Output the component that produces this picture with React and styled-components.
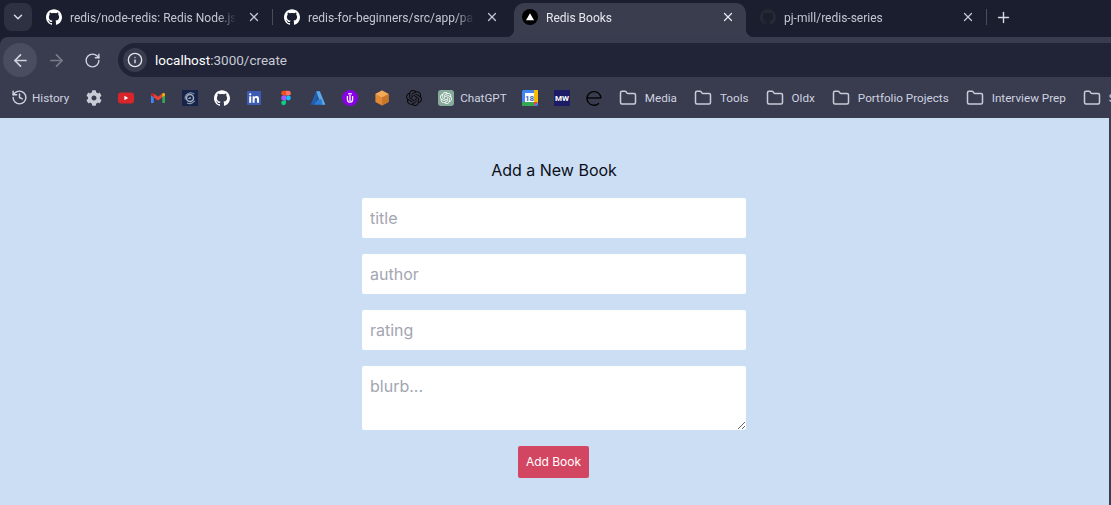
import React from "react";
import styled, { createGlobalStyle } from "styled-components";
import { ArrowLeft, ArrowRight, RotateCw, Info, X, Plus, ChevronDown, History, Folder } from "lucide-react";
import { SiGithub, SiOpenai } from "react-icons/si";
import { FaCog } from "react-icons/fa";

const Global = createGlobalStyle`
  html, body { margin: 0; padding: 0; height: 100%; overflow: hidden; background: #1b1e2e; }
  * { box-sizing: border-box; }
`;

const UI_FONT = `"Roboto", "Liberation Sans", sans-serif`;
const PAGE_FONT = `"Inter", "Liberation Sans", sans-serif`;

const Shell = styled.div`
  width: 1111px;
  height: 505px;
  display: flex;
  flex-direction: column;
  overflow: hidden;
  background: #1b1e2e;
  font-family: ${UI_FONT};
`;

const TabStrip = styled.div`
  height: 37px;
  flex: none;
  background: #1b1e2e;
  display: flex;
  padding: 3px 0 0 4px;
`;

const Expander = styled.button`
  width: 28px;
  height: 28px;
  flex: none;
  margin-right: 2px;
  border: 0;
  padding: 0;
  border-radius: 8px;
  background: #2e3142;
  color: #d7dae6;
  display: flex;
  align-items: center;
  justify-content: center;
`;

const Tab = styled.div`
  position: relative;
  flex: none;
  height: 34px;
  display: flex;
  align-items: center;
  gap: 8px;
  padding-bottom: 6px;
  width: ${(p) => (p.$active ? "232px" : "238px")};
  margin: ${(p) => (p.$active ? "0 2px 0 4px" : "0")};
  padding-left: ${(p) => (p.$active ? "8px" : "12px")};
  padding-right: 10px;
  background: ${(p) => (p.$active ? "#3a3d4e" : "transparent")};
  border-radius: ${(p) => (p.$active ? "10px 10px 0 0" : "0")};
  color: ${(p) => (p.$active ? "#e6e8f0" : "#c4c7d3")};

  ${(p) =>
    p.$active &&
    `
    &::before, &::after {
      content: "";
      position: absolute;
      bottom: 0;
      width: 8px;
      height: 8px;
    }
    &::before { left: -8px; background: radial-gradient(circle at 0 0, transparent 8px, #3a3d4e 8.5px); }
    &::after { right: -8px; background: radial-gradient(circle at 100% 0, transparent 8px, #3a3d4e 8.5px); }
  `}

  ${(p) =>
    p.$divider &&
    `
    &::after {
      content: "";
      position: absolute;
      right: -1px;
      top: 6px;
      width: 1px;
      height: 16px;
      background: #4a4d5e;
    }
  `}
`;

const Favicon = styled.span`
  width: 16px;
  height: 16px;
  flex: none;
  display: flex;
  color: ${(p) => p.$color || "#ffffff"};
`;

const TabTitle = styled.span`
  flex: 1;
  min-width: 0;
  font-size: 12px;
  line-height: 16px;
  margin-top: 1px;
  white-space: nowrap;
  overflow: hidden;
  mask-image: linear-gradient(to right, #000 calc(100% - 20px), transparent calc(100% - 2px));
`;

const TabClose = styled.span`
  flex: none;
  width: 16px;
  height: 16px;
  display: flex;
  align-items: center;
  justify-content: center;
`;

const NewTab = styled.span`
  margin: 0 0 0 9px;
  height: 28px;
  display: flex;
  align-items: center;
  color: #d7dae6;
`;

const Toolbar = styled.div`
  height: 40px;
  flex: none;
  background: #393c4e;
  border-radius: 8px 0 0 0;
  display: flex;
  align-items: center;
  padding: 6px 0 0 3px;
`;

const RoundButton = styled.span`
  width: 34px;
  height: 34px;
  flex: none;
  margin-right: 2px;
  border-radius: 50%;
  display: flex;
  align-items: center;
  justify-content: center;
  background: ${(p) => (p.$hover ? "#4a4d5f" : "transparent")};
  color: ${(p) => (p.$dim ? "#777a89" : "#cfd2de")};
`;

const UrlBar = styled.div`
  flex: 1;
  margin-left: 7px;
  height: 34px;
  border-radius: 17px 0 0 17px;
  background: #212436;
  display: flex;
  align-items: center;
  padding-left: 5px;
  gap: 8px;
  font-size: 13.5px;
  color: #c7cad6;
`;

const SiteInfo = styled.span`
  width: 24px;
  height: 24px;
  border-radius: 50%;
  background: #393c4e;
  color: #e4e6ee;
  display: flex;
  align-items: center;
  justify-content: center;
`;

const Host = styled.span`
  color: #ffffff;
`;

const BookmarkBar = styled.div`
  height: 41px;
  flex: none;
  background: #393c4e;
  display: flex;
  align-items: center;
  padding-left: 3px;
  overflow: hidden;
`;

const Bookmark = styled.div`
  flex: none;
  display: flex;
  align-items: center;
  gap: ${(p) => (p.$folder ? "9px" : "6px")};
  padding: ${(p) => (p.$folder ? "0 8px" : "0 8px")};
  padding-right: ${(p) => (p.$endPad ? p.$endPad : "8px")};
  margin-left: ${(p) => (p.$folder ? "2px" : "0")};
  font-size: 11.7px;
  color: #cfd3e0;
  white-space: nowrap;
`;

const HistoryIcon = styled(History)`
  flex: none;
  margin: 0 -2px 0 0;
`;

const FolderIcon = styled(Folder)`
  flex: none;
  margin: -1px;
`;

const PageFrame = styled.div`
  flex: 1;
  display: flex;
  background: #393c4e;
`;

const Page = styled.main`
  width: 1109px;
  background: #cbdef3;
  padding: 43px 1px 0 0;
  font-family: ${PAGE_FONT};
`;

const Heading = styled.h2`
  margin: 0 0 18px;
  font-size: 16px;
  line-height: 19px;
  font-weight: 400;
  text-align: center;
  color: #0b0f1a;
`;

const Form = styled.form`
  width: 384px;
  margin: 0 auto;
  display: flex;
  flex-direction: column;
  gap: 16px;
`;

const Input = styled.input`
  display: block;
  width: 100%;
  height: 40px;
  border: 0;
  border-radius: 2px;
  padding: 8px;
  background: #fff;
  font: 400 16px/24px ${PAGE_FONT};
  &::placeholder { color: #a3a5b1; opacity: 1; }
`;

const Blurb = styled.textarea`
  display: block;
  width: 100%;
  height: 64px;
  border: 0;
  border-radius: 2px;
  padding: 8px;
  background: #fff;
  resize: vertical;
  font: 400 16px/24px ${PAGE_FONT};
  &::placeholder { color: #a3a5b1; opacity: 1; }
`;

const Submit = styled.button`
  align-self: flex-start;
  margin-left: 156px;
  width: 71px;
  height: 32px;
  border: 0;
  border-radius: 2px;
  padding: 0;
  background: #d34661;
  color: #fff;
  font: 400 12px/16px ${PAGE_FONT};
`;

const Gmail = () => (
  <svg viewBox="0 0 16 16" width="16" height="16">
    <path d="M1 4v9h2.7V7.2L1 4z" fill="#4285f4" />
    <path d="M15 4v9h-2.7V7.2L15 4z" fill="#34a853" />
    <path d="M3.7 3.4 8 6.8l4.3-3.4v3.8L8 10.4 3.7 7.2z" fill="#ea4335" />
    <path d="M1 4.6c0-1.3 1.6-1.9 2.7-1.2v3.8L1 5.2z" fill="#c5221f" />
    <path d="M15 4.6c0-1.3-1.6-1.9-2.7-1.2v3.8L15 5.2z" fill="#fbbc04" />
  </svg>
);

const Youtube = () => (
  <svg viewBox="0 0 16 16" width="16" height="16">
    <rect x="0" y="2.5" width="16" height="11" rx="3" fill="#d9252a" />
    <path d="M6.4 5.8v4.4L10.2 8z" fill="#fff" />
  </svg>
);

const Spiral = () => (
  <svg viewBox="0 0 16 16" width="16" height="16" fill="none">
    <rect width="16" height="16" fill="#16244a" />
    <circle cx="8" cy="8" r="3.500" stroke="#a3adc0" strokeWidth="1.500" />
    <path d="M8.800 8.500c-.5-1-2-.6-1.900.5" stroke="#c3cad8" strokeWidth="1.100" />
    <path d="M3.200 9.500C2.500 6 5 2.800 8.500 2.700c1.500 0 2.800.5 3.800 1.500" stroke="#8d98b0" strokeWidth="1.100" />
    <path d="M5 13c2.500 1.200 6 .6 7.700-2.200" stroke="#8d98b0" strokeWidth="1.100" />
  </svg>
);

const Linkedin = () => (
  <svg viewBox="0 0 16 16" width="16" height="16">
    <rect x="1" y="1" width="14" height="14" rx="1" fill="#3b5bb5" />
    <rect x="3.200" y="6.300" width="2" height="6.500" fill="#fff" />
    <circle cx="4.200" cy="4.300" r="1.150" fill="#fff" />
    <path d="M6.600 6.300h1.900v.9c.4-.6 1.100-1.100 2.100-1.100 1.900 0 2.400 1.200 2.400 2.900v3.800h-2V9.400c0-.8-.2-1.500-1.100-1.500s-1.300.7-1.300 1.500v3.400h-2z" fill="#fff" />
  </svg>
);

const Figma = () => (
  <svg viewBox="0 0 16 16" width="16" height="16">
    <path d="M8 .8H5.600a2.400 2.400 0 0 0 0 4.800H8z" fill="#f24e1e" />
    <path d="M8 .8h2.400a2.400 2.400 0 0 1 0 4.800H8z" fill="#ff7262" />
    <path d="M8 5.600H5.600a2.400 2.400 0 0 0 0 4.800H8z" fill="#a259ff" />
    <circle cx="10.400" cy="8" r="2.400" fill="#1abcfe" />
    <path d="M5.600 10.400H8v2.400a2.400 2.400 0 1 1-2.400-2.400z" fill="#0acf83" />
  </svg>
);

const Azure = () => (
  <svg viewBox="0 0 16 16" width="16" height="16">
    <path d="M6.200 1.300h3.600L5 14.700H.6z" fill="#1f5fb4" />
    <path d="M9.800 1.300 15.400 14.700h-4.600L6.400 1.300z" fill="#5fa8e8" />
    <path d="M7.800 9.300h3.700l1 5.400H4.200z" fill="#2b7cd3" />
  </svg>
);

const Purple = () => (
  <svg viewBox="0 0 16 16" width="16" height="16" fill="none">
    <circle cx="8" cy="8" r="8" fill="#8a00e6" />
    <path d="M5.400 6v3.600a2.600 2.600 0 0 0 5.200 0V6" stroke="#fff" strokeWidth="1.300" />
    <path d="M8 5v6" stroke="#fff" strokeWidth="1.300" />
    <path d="M6.200 3.800h3.600" stroke="#fff" strokeWidth="1.300" />
  </svg>
);

const Cube = () => (
  <svg viewBox="0 0 16 16" width="16" height="16">
    <path d="M8 .6 14.600 4v8L8 15.400 1.400 12V4z" fill="#e28a35" />
    <path d="M8 .6 14.600 4 8 7.400 1.400 4z" fill="#f2a95a" />
    <path d="M8 7.400 14.600 4v8L8 15.400z" fill="#c9762a" />
  </svg>
);

const ChatGpt = () => (
  <svg viewBox="0 0 16 16" width="16" height="16">
    <rect width="16" height="16" rx="3" fill="#86ab9b" />
    <foreignObject x="2" y="2" width="12" height="12">
      <SiOpenai size={12} color="#fff" />
    </foreignObject>
  </svg>
);

const Calendar = () => (
  <svg viewBox="0 0 16 16" width="16" height="16">
    <rect width="16" height="16" rx="1.500" fill="#4285f4" />
    <rect x="12" width="4" height="13" fill="#fbbc04" />
    <rect y="12" width="12" height="4" fill="#34a853" />
    <path d="M12 12h4l-4 4z" fill="#ea4335" />
    <rect x="3" y="3" width="9" height="9" fill="#fff" />
    <text x="7.500" y="10.500" fontSize="8" fontWeight="700" textAnchor="middle" fill="#3a66c4" fontFamily="Roboto, sans-serif">18</text>
  </svg>
);

const Merriam = () => (
  <svg viewBox="0 0 16 16" width="16" height="16">
    <rect width="16" height="16" fill="#1c1b66" />
    <text x="8" y="10.800" fontSize="8" fontWeight="700" textAnchor="middle" fill="#fff" fontFamily="Roboto, sans-serif">MW</text>
  </svg>
);

const EdgeMark = () => (
  <svg viewBox="0 0 16 16" width="16" height="16" fill="none">
    <path d="M1 8h14" stroke="#000" strokeWidth="1.300" />
    <path d="M15 8a7 6.800 0 1 0-2 5.200" stroke="#000" strokeWidth="1.300" />
  </svg>
);

const VercelMark = () => (
  <svg viewBox="0 0 16 16" width="16" height="16">
    <circle cx="8" cy="8" r="8" fill="#000" />
    <path d="M8 4.200 12 11.200H4z" fill="#fff" />
  </svg>
);

const tabs = [
  { title: "redis/node-redis: Redis Node.js client", icon: <SiGithub size={16} />, color: "#fff", divider: true },
  { title: "redis-for-beginners/src/app/page.jsx", icon: <SiGithub size={16} />, color: "#fff" },
  { title: "Redis Books", icon: <VercelMark />, active: true },
  { title: "pj-mill/redis-series", icon: <SiGithub size={16} />, color: "#272a35", divider: true },
];

const icons = [
  <FaCog size={16} color="#c9ccd6" key="g" />,
  <Youtube key="y" />,
  <Gmail key="m" />,
  <Spiral key="s" />,
  <SiGithub size={16} color="#fff" key="h" />,
  <Linkedin key="l" />,
  <Figma key="f" />,
  <Azure key="a" />,
  <Purple key="p" />,
  <Cube key="c" />,
  <SiOpenai size={16} color="#0a0a0a" key="o" />,
];

const folders = ["Media", "Tools", "Oldx", "Portfolio Projects", "Interview Prep", "S"];

export default function App() {
  return (
    <Shell>
      <Global />
      <TabStrip>
        <Expander aria-label="Search tabs">
          <ChevronDown size={14} strokeWidth={2.5} />
        </Expander>
        {tabs.map((t) => (
          <Tab key={t.title} $active={t.active} $divider={t.divider}>
            <Favicon $color={t.color}>{t.icon}</Favicon>
            <TabTitle>{t.title}</TabTitle>
            <TabClose>
              <X size={14} strokeWidth={2.2} />
            </TabClose>
          </Tab>
        ))}
        <NewTab>
          <Plus size={17} strokeWidth={2} />
        </NewTab>
      </TabStrip>
      <Toolbar>
        <RoundButton $hover>
          <ArrowLeft size={19} strokeWidth={2.2} />
        </RoundButton>
        <RoundButton $dim>
          <ArrowRight size={19} strokeWidth={2.2} />
        </RoundButton>
        <RoundButton>
          <RotateCw size={17} strokeWidth={2} />
        </RoundButton>
        <UrlBar>
          <SiteInfo>
            <Info size={16} strokeWidth={2} />
          </SiteInfo>
          <span>
            <Host>localhost</Host>:3000/create
          </span>
        </UrlBar>
      </Toolbar>
      <BookmarkBar>
        <Bookmark $endPad="9px">
          <HistoryIcon size={17} />
          History
        </Bookmark>
        {icons.map((ic, i) => (
          <Bookmark key={i}>{ic}</Bookmark>
        ))}
        <Bookmark $endPad="7px">
          <ChatGpt />
          ChatGPT
        </Bookmark>
        <Bookmark><Calendar /></Bookmark>
        <Bookmark><Merriam /></Bookmark>
        <Bookmark><EdgeMark /></Bookmark>
        {folders.map((f) => (
          <Bookmark key={f} $folder>
            <FolderIcon size={18} strokeWidth={2} color="#c9ccd6" />
            {f}
          </Bookmark>
        ))}
      </BookmarkBar>
      <PageFrame>
        <Page>
          <Heading>Add a New Book</Heading>
          <Form onSubmit={(e) => e.preventDefault()}>
            <Input placeholder="title" />
            <Input placeholder="author" />
            <Input placeholder="rating" />
            <Blurb placeholder="blurb..." />
            <Submit>Add Book</Submit>
          </Form>
        </Page>
      </PageFrame>
    </Shell>
  );
}
